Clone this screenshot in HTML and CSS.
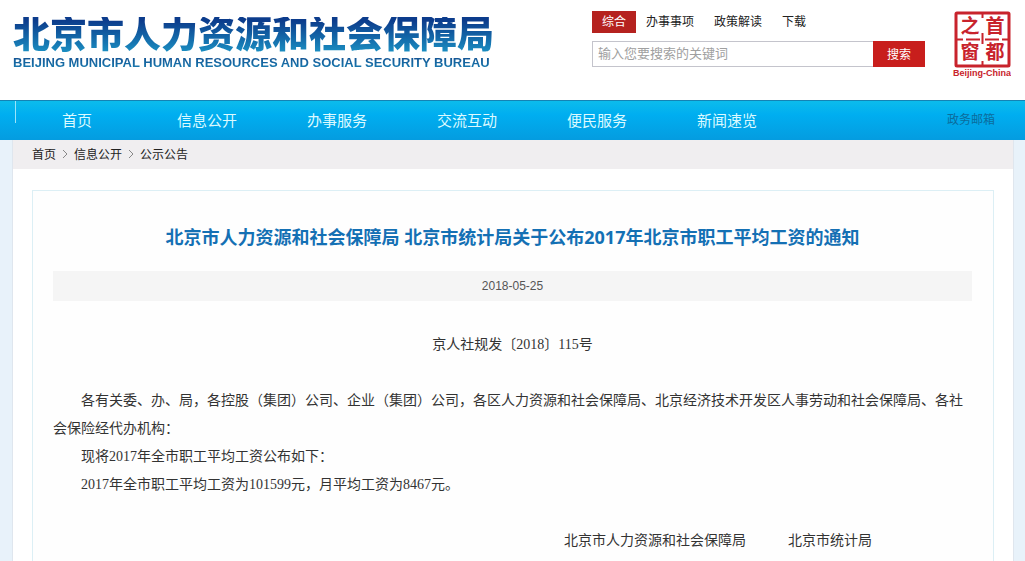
FILE: index.html
```
<!DOCTYPE html>
<html lang="zh-CN">
<head>
	<meta charset="UTF-8">
	<title>北京市人力资源和社会保障局</title>
	<link rel="stylesheet" href="styles.css">
</head>
<body>
<header class="header">
	<div class="logo">
		<p class="logo-cn">北京市人力资源和社会保障局</p>
		<p class="logo-en">BEIJING MUNICIPAL HUMAN RESOURCES AND SOCIAL SECURITY BUREAU</p>
	</div>
	<form class="search">
		<div class="search-tabs">
			<a class="active" href="#">综合</a>
			<a href="#">办事事项</a>
			<a href="#">政策解读</a>
			<a href="#">下载</a>
		</div>
		<div class="search-row">
			<input type="text" class="search-input" aria-label="搜索" placeholder="输入您要搜索的关键词">
			<button type="submit" class="search-btn">搜索</button>
		</div>
	</form>
	<a class="stamp" href="#">
		<svg width="58" height="68" viewBox="0 0 58 68">
			<rect x="3" y="2" width="53" height="53" rx="1" fill="#fff" stroke="#c8232c" stroke-width="3"/>
			<path d="M29.500 3V7M29.500 22V33M29.500 50V54M4 28.500H10M13 28.500H27M32 28.500H46M49 28.500H55" stroke="#c8232c" stroke-width="2"/>
			<g class="stamp-char">
				<text x="17" y="22">之</text>
				<text x="42" y="22">首</text>
				<text x="17" y="48">窗</text>
				<text x="42" y="48">都</text>
			</g>
			<text class="stamp-en" x="29" y="65">Beijing-China</text>
		</svg>
	</a>
</header>

<nav class="nav">
	<ul class="nav-list">
		<li><a href="#">首页</a></li>
		<li><a href="#">信息公开</a></li>
		<li><a href="#">办事服务</a></li>
		<li><a href="#">交流互动</a></li>
		<li><a href="#">便民服务</a></li>
		<li><a href="#">新闻速览</a></li>
	</ul>
	<a class="mail" href="#">政务邮箱</a>
</nav>

<main class="wrapper">
	<div class="crumbs">
		<a href="#">首页</a>
		<svg width="6" height="10" viewBox="0 0 6 10"><path d="M1 1L5 5L1 9"/></svg>
		<a href="#">信息公开</a>
		<svg width="6" height="10" viewBox="0 0 6 10"><path d="M1 1L5 5L1 9"/></svg>
		<a href="#">公示公告</a>
	</div>
	<article class="article">
		<h1>北京市人力资源和社会保障局 北京市统计局关于公布2017年北京市职工平均工资的通知</h1>
		<div class="date">2018-05-25</div>
		<div class="content">
			<p class="doc-no">京人社规发〔2018〕115号</p>
			<p>各有关委、办、局，各控股（集团）公司、企业（集团）公司，各区人力资源和社会保障局、北京经济技术开发区人事劳动和社会保障局、各社会保险经代办机构：</p>
			<p>现将2017年全市职工平均工资公布如下：</p>
			<p>2017年全市职工平均工资为101599元，月平均工资为8467元。</p>
			<div class="sign">
				<span>北京市人力资源和社会保障局</span>
				<span>北京市统计局</span>
			</div>
		</div>
	</article>
</main>
</body>
</html>
```

FILE: styles.css
```
* {
	margin: 0;
	padding: 0;
	box-sizing: border-box;
}
body {
	background-color: #e8f2fa;
	font-family: "Liberation Sans", "Noto Sans CJK SC", sans-serif;
	font-size: 12px;
	color: #222;
	text-spacing-trim: space-all;
}
a {
	color: inherit;
	text-decoration: none;
}
ul {
	list-style: none;
}

/* 头部 */
.header {
	display: flex;
	align-items: flex-start;
	height: 100px;
	padding: 11px 14px 0 13px;
	background-color: #fff;
}
.logo {
	flex: 1;
	padding-top: 6px;
	white-space: nowrap;
}
.logo p {
	width: max-content;
	color: transparent;
	-webkit-background-clip: text;
	background-clip: text;
}
.logo-cn {
	line-height: 38px;
	font-size: 37px;
	font-weight: 900;
	background-image: linear-gradient(#0c3c8c 10%, #1a8cc0 90%);
}
.logo-en {
	line-height: 16px;
	font-size: 13px;
	font-weight: bold;
	background-image: linear-gradient(#124a8c, #1a86b8);
}
.search {
	width: 333px;
	margin-right: 28px;
}
.search-tabs {
	display: flex;
	gap: 20px;
	line-height: 22px;
}
.search-tabs .active {
	width: 44px;
	margin-right: -10px;
	text-align: center;
	color: #fff;
	background-color: #b5221f;
}
.search-row {
	display: flex;
	height: 26px;
	margin-top: 8px;
}
.search-input {
	flex: 1;
	min-width: 0;
	padding: 0 5px 2px;
	border: 1px solid #c4c4cc;
	border-right: 0;
	font-family: inherit;
	font-size: 13px;
}
.search-input::placeholder {
	color: #a0a0a0;
}
.search-btn {
	width: 52px;
	padding-bottom: 2px;
	border: 0;
	font-family: inherit;
	font-size: 12px;
	color: #fff;
	background-color: #c81e1c;
}
.stamp svg {
	display: block;
}
.stamp-char {
	font-family: "Noto Sans CJK SC", sans-serif;
	font-size: 19px;
	font-weight: bold;
	fill: #c8232c;
	text-anchor: middle;
}
.stamp-en {
	font-size: 9px;
	font-weight: bold;
	fill: #c8232c;
	text-anchor: middle;
}

/* 导航 */
.nav {
	display: flex;
	height: 40px;
	padding: 0 30px 0 15px;
	border-top: 1px solid #1483b4;
	background-image: linear-gradient(#0cbcec, #00aef0 35%, #049ce0);
}
.nav-list {
	display: flex;
	flex: 1;
}
.nav-list::before {
	content: "";
	width: 1px;
	height: 22px;
	margin-right: -4px;
	background-color: #9be4fa;
}
.nav-list li {
	width: 130px;
	line-height: 40px;
	font-size: 15px;
	color: #dcfaff;
	text-align: center;
}
.mail {
	line-height: 38px;
	color: #0c6c9c;
}

/* 正文 */
.wrapper {
	display: flex;
	flex-direction: column;
	min-height: calc(100vh - 140px);
	margin: 0 11px 0 12px;
	border: 1px solid #dfe6ee;
	border-width: 0 1px;
	background-color: #fff;
}
.crumbs {
	display: flex;
	align-items: center;
	gap: 6px;
	height: 29px;
	padding: 0 19px 2px;
	background-color: #f0eef0;
}
.crumbs svg {
	fill: none;
	stroke: #888;
}
.article {
	flex: 1;
	margin: 21px 19px 0;
	padding: 32px 21px 0 20px;
	border: 1px solid #dceff5;
	border-bottom: 0;
	background-color: #fefefe;
}
.article h1 {
	line-height: 28px;
	font-family: "Open Sans", "Noto Sans CJK SC", sans-serif;
	font-size: 18px;
	text-align: center;
	color: #1470b4;
}
.date {
	margin-top: 20px;
	line-height: 30px;
	text-align: center;
	color: #555;
	background-color: #f5f5f5;
}
.content {
	margin-top: 30px;
	line-height: 28px;
	font-family: "Liberation Serif", "Noto Sans CJK SC", serif;
	font-size: 14px;
	color: #333;
}
.content p {
	text-indent: 2em;
}
.content .doc-no {
	margin-bottom: 28px;
	text-indent: 0;
	text-align: center;
}
.sign {
	display: flex;
	justify-content: flex-end;
	gap: 42px;
	margin-top: 28px;
	padding-right: 100px;
}
```
